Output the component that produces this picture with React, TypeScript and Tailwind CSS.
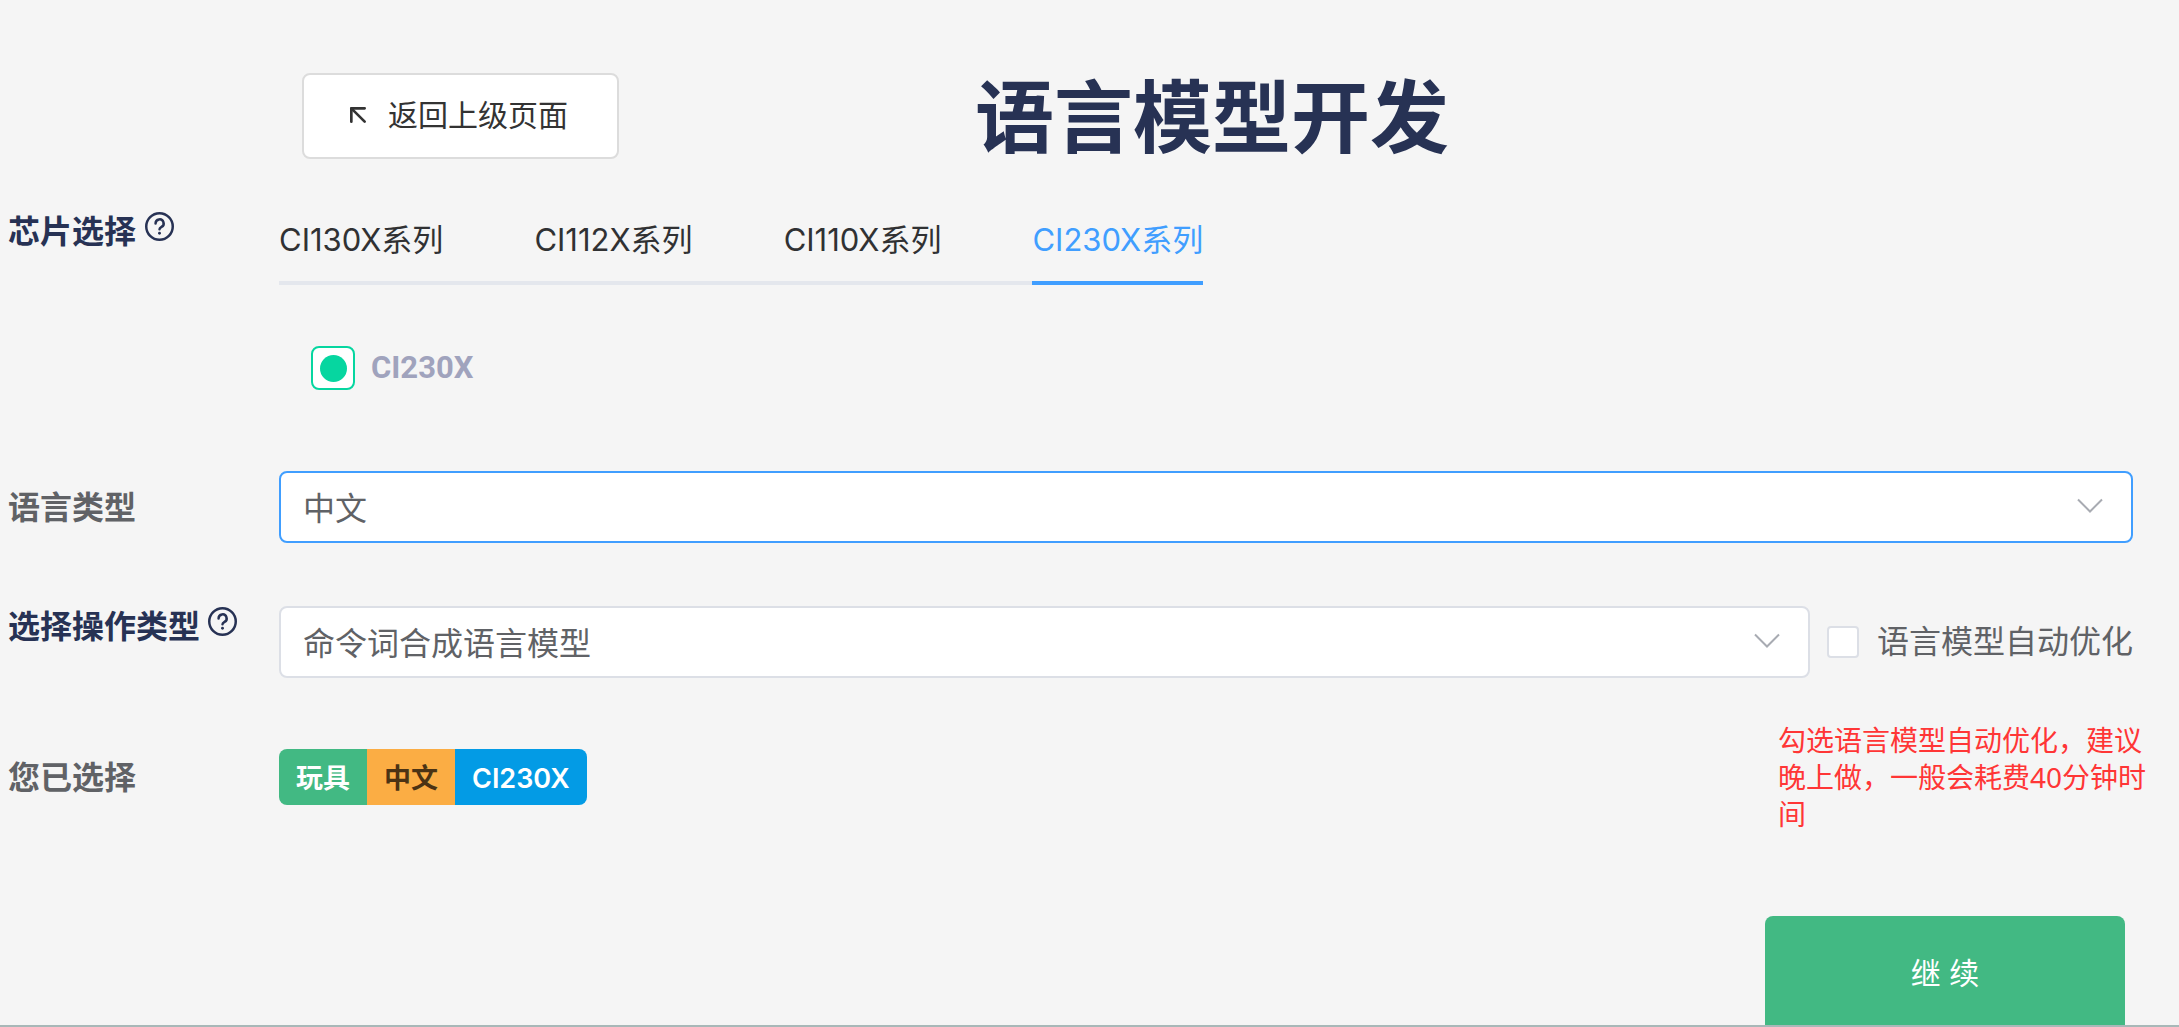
import React, { useState } from "react";
import { ArrowUpLeft } from "lucide-react";

const SERIES = ["CI130X系列", "CI112X系列", "CI110X系列", "CI230X系列"];

const HelpIcon = () => (
    <svg
        viewBox="0 0 28 28"
        className="h-[29px] w-[29px] shrink-0"
        fill="none"
        stroke="currentColor"
        strokeWidth="2.4"
        strokeLinecap="round"
        strokeLinejoin="round"
    >
        <circle cx="14" cy="14" r="12.8" />
        <path d="M10.2 11a3.9 3.9 0 1 1 5.8 3.4c-1.4.8-2 1.3-2 2.3" />
        <path d="M14 20.5v.1" strokeWidth="2.8" />
    </svg>
);

interface SelectBoxProps {
    id: string;
    options: string[];
    active?: boolean;
}

const SelectBox: React.FC<SelectBoxProps> = ({ id, options, active }) => (
    <div className="relative min-w-0 flex-1">
        <select
            id={id}
            className={
                active
                    ? "h-18 w-full appearance-none rounded-lg border-2 border-[#409eff] bg-white pt-1 pl-[22px] pr-16 text-[32px] text-[#606266] outline-none"
                    : "h-18 w-full appearance-none rounded-lg border-2 border-[#dcdfe6] bg-white pt-1 pl-[22px] pr-16 text-[32px] text-[#606266] outline-none"
            }
        >
            {options.map((option) => (
                <option key={option}>{option}</option>
            ))}
        </select>
        <svg
            viewBox="0 0 26 16"
            className="pointer-events-none absolute right-[30px] top-[27px] h-4 w-[26px]"
            fill="none"
            stroke="#a8abb2"
            strokeWidth="2"
        >
            <path d="M1 1.5 13 13.5 25 1.5" />
        </svg>
    </div>
);

const App: React.FC = () => {
    const [series, setSeries] = useState("CI230X系列");
    const [optimize, setOptimize] = useState(false);

    return (
        <div className="flex min-h-screen flex-col justify-between overflow-hidden bg-[#f5f5f5] font-['Inter','Noto_Sans_CJK_SC',sans-serif] text-[32px] leading-10 text-[#606266]">
            <main className="pl-2">
                <header className="flex items-center pt-[73px] pl-[294px]">
                    <button className="flex h-[86px] items-center gap-[14px] rounded-lg border-2 border-[#dcdcdc] bg-white pl-[38px] pr-[49px] pb-[2px] text-[30px] text-[#333333]">
                        <ArrowUpLeft className="h-8 w-8" strokeWidth={2} />
                        返回上级页面
                    </button>
                    <h1 className="ml-[356px] pt-1 text-[79px] leading-[82px] font-bold text-[#273254]">
                        语言模型开发
                    </h1>
                </header>

                <section className="mt-12 flex">
                    <div className="flex w-[271px] shrink-0 gap-[9px] pt-[5px] font-bold text-[#273254]">
                        芯片选择
                        <HelpIcon />
                    </div>
                    <div>
                        <div
                            role="tablist"
                            className="flex gap-[91px] border-b-4 border-[#e4e7ed] text-[31px]"
                        >
                            {SERIES.map((name) => (
                                <button
                                    key={name}
                                    role="tab"
                                    aria-selected={name === series}
                                    onClick={() => setSeries(name)}
                                    className={
                                        name === series
                                            ? "-mb-1 h-[78px] border-b-4 border-[#409eff] pb-2 text-[#409eff]"
                                            : "-mb-1 h-[78px] border-b-4 border-transparent pb-2 text-[#303133]"
                                    }
                                >
                                    {name}
                                </button>
                            ))}
                        </div>
                        <label className="mt-[61px] ml-8 flex items-center gap-4 font-[family-name:Roboto,sans-serif] text-[31px] leading-10 font-bold text-[#a0a3bd]">
                            <input
                                type="radio"
                                name="chip"
                                defaultChecked
                                className="flex h-11 w-11 appearance-none items-center justify-center rounded-lg border-2 border-[#06d6a0] bg-white before:h-[27px] before:w-[27px] before:rounded-full before:bg-[#06d6a0]"
                            />
                            CI230X
                        </label>
                    </div>
                </section>

                <section className="mt-[81px] flex items-center pr-[46px]">
                    <label htmlFor="language" className="w-[271px] shrink-0 pt-[2px] font-bold">
                        语言类型
                    </label>
                    <SelectBox id="language" options={["中文", "英文"]} active />
                </section>

                <section className="mt-[63px] flex pr-[46px]">
                    <label
                        htmlFor="operation"
                        className="flex w-[271px] shrink-0 gap-2 pt-px font-bold text-[#273254]"
                    >
                        选择操作类型
                        <HelpIcon />
                    </label>
                    <SelectBox id="operation" options={["命令词合成语言模型"]} />
                    <label className="ml-[17px] flex items-center gap-[18px]">
                        <input
                            type="checkbox"
                            checked={optimize}
                            onChange={() => setOptimize(!optimize)}
                            className="h-8 w-8 appearance-none rounded-sm border-2 border-[#dcdfe6] bg-white checked:bg-[#409eff]"
                        />
                        语言模型自动优化
                    </label>
                </section>

                <section className="mt-11 flex pr-[26px]">
                    <div className="mt-9 w-[271px] shrink-0 font-bold">您已选择</div>
                    <div className="mt-[27px] flex h-14 overflow-hidden rounded-lg text-[27px] leading-[60px] font-semibold text-white">
                        <span className="bg-[#42b983] px-[17px]">玩具</span>
                        <span className="bg-[#fbad44] px-[17px] text-[#4b3314]">中文</span>
                        <span className="bg-[#039be5] px-[17px]">CI230X</span>
                    </div>
                    <p className="ml-auto w-[375px] font-[family-name:Noto_Sans,Noto_Sans_CJK_SC,sans-serif] text-[28px] leading-[37px] text-[#ff3636]">
                        勾选语言模型自动优化，建议晚上做，一般会耗费40分钟时间
                    </p>
                </section>
            </main>

            <footer className="flex justify-end border-b-2 border-[#a8b8b8] pr-[54px]">
                <button className="h-[109px] w-[360px] rounded-t-lg bg-[#42b983] pt-1 text-[30px] text-white">
                    继 续
                </button>
            </footer>
        </div>
    );
};

export default App;
